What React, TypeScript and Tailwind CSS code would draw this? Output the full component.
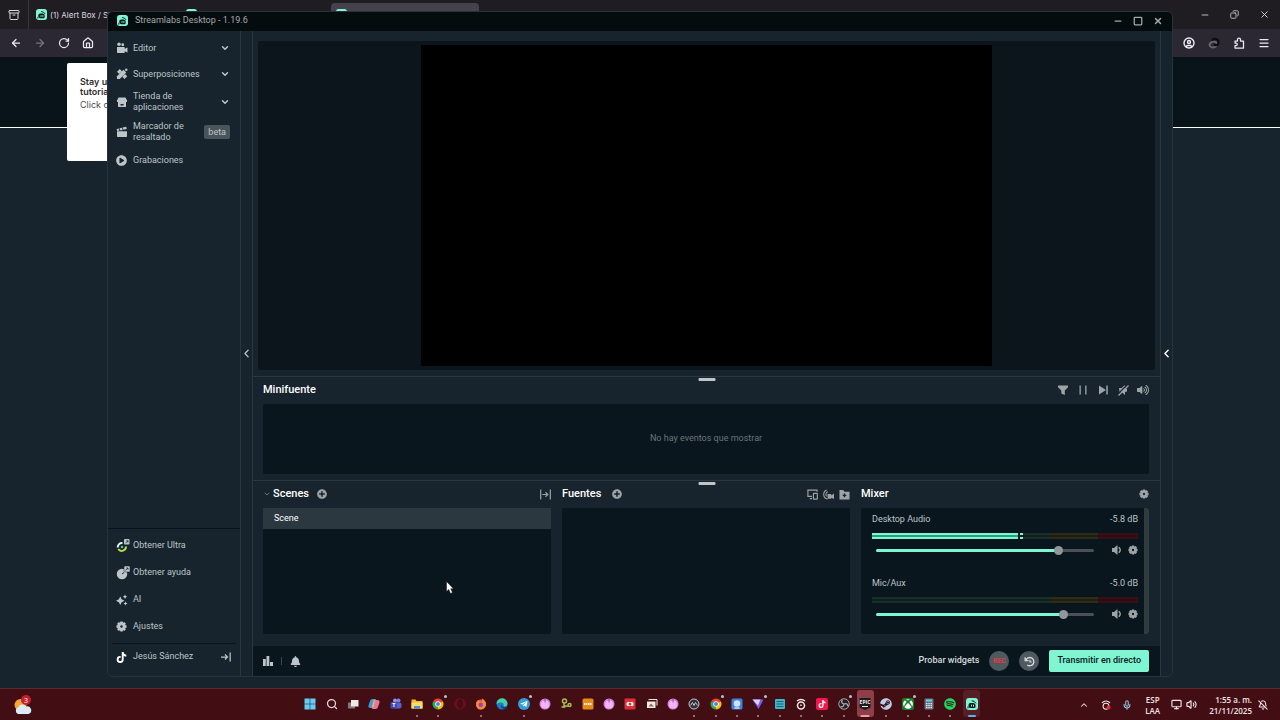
import type { ReactNode } from 'react';
import {
  FaVolumeUp, FaBell, FaPlusCircle, FaPlayCircle, FaTiktok, FaTelegramPlane, FaXbox,
  FaSteam, FaSpotify, FaOpera,
} from 'react-icons/fa';
import {
  ArrowLeft, ArrowRight, RotateCw, House, ChevronDown, ChevronLeft, ChevronUp, X, Minus,
  Square, Copy, Menu, CircleUser, Search, Mic, Volume2, BellOff, Monitor, Archive,
} from 'lucide-react';

function Logo({ className = '' }: { className?: string }) {
  return (
    <svg viewBox="0 0 24 24" className={className} aria-hidden="true">
      <rect width="24" height="24" rx="6" fill="#80f5d2" />
      <path d="M5 14a4 4 0 0 1 4-4h5a5 5 0 0 1 5 5v2.500a2.500 2.500 0 0 1-2.500 2.500H9a4 4 0 0 1-4-4z" fill="#09161d" />
      <path d="M12 5.500a8 8 0 0 1 7.500 4.500M4 18v2" stroke="#09161d" strokeWidth="2" fill="none" strokeLinecap="round" />
      <path d="M11 14v2.500M15 14v2.500" stroke="#80f5d2" strokeWidth="2" strokeLinecap="round" />
    </svg>
  );
}

function Gear({ className = '' }: { className?: string }) {
  return (
    <svg viewBox="0 0 24 24" className={className} fill="none" stroke="currentColor" aria-hidden="true">
      <circle cx="12" cy="12" r="6" strokeWidth="6.500" />
      <path d="M12 1v4M12 19v4M1 12h4M19 12h4M4.200 4.200 7 7M17 17l2.800 2.800M19.800 4.200 17 7M7 17l-2.800 2.800" strokeWidth="5.500" />
    </svg>
  );
}

const EditorIcon = (
  <svg viewBox="0 0 24 24" className="size-3" fill="currentColor" aria-hidden="true">
    <circle cx="6" cy="4.500" r="3.500" /><circle cx="13.500" cy="5.500" r="2.800" />
    <path d="M2 10h14a1.500 1.500 0 0 1 1.500 1.500v2L23 11v10l-5.500-2.500v2A1.500 1.500 0 0 1 16 22H3.500A1.500 1.500 0 0 1 2 20.500z" />
  </svg>
);
const OverlayIcon = (
  <svg viewBox="0 0 24 24" className="size-3" fill="currentColor" aria-hidden="true">
    <path d="M2 16.500 15 3.500l5.500 5.500L7.500 22H2z" />
    <path d="M2 7.500 7.500 2l4.500 4.500L6.500 12zM12.500 17.500l5.500-5.500 4.500 4.500-5.500 5.500z" />
    <circle cx="20.500" cy="3.500" r="2.500" />
  </svg>
);
const StoreIcon = (
  <svg viewBox="0 0 24 24" className="size-3" fill="currentColor" aria-hidden="true">
    <path d="M5 3h14l3 6v3H2V9z" />
    <path d="M4 12h16v10H4z" />
    <path d="M9 16h6v3H9z" fill="#17242d" />
  </svg>
);
const ClapperIcon = (
  <svg viewBox="0 0 24 24" className="size-3" fill="currentColor" aria-hidden="true">
    <path d="M2 10.500h20v10a1.500 1.500 0 0 1-1.500 1.500h-17A1.500 1.500 0 0 1 2 20.500z" />
    <path d="m1.500 6 4-1 1.500 4-5 1zM7 4.500l4.500-1L13.500 8 9 9zM13 3l7.500-1.500 1 4.500L15 7.500z" />
  </svg>
);
const UltraIcon = (
  <svg viewBox="0 0 28 28" className="size-[14px]" aria-hidden="true">
    <path d="M13 8A8.500 8.500 0 0 0 3.500 17" stroke="#eaf3f2" strokeWidth="4" fill="none" />
    <path d="M4.500 20A8.500 8.500 0 0 0 20 15" stroke="#b7dc47" strokeWidth="4" fill="none" />
    <circle cx="12" cy="16" r="2.500" fill="#3bd19a" />
    <rect x="16" y="0" width="11" height="11" rx="2" fill="#bdc5c8" />
    <path d="M19 8.500 24 3.500m0 3.500V3.500h-3.500" stroke="#17242d" strokeWidth="1.500" fill="none" />
  </svg>
);
const HelpIcon = (
  <svg viewBox="0 0 28 28" className="size-[14px]" aria-hidden="true">
    <circle cx="12" cy="16" r="10.500" fill="#bdc5c8" />
    <path d="m12 16 4-3" stroke="#17242d" strokeWidth="2" fill="none" />
    <rect x="16" y="0" width="12" height="12" rx="2" fill="#bdc5c8" stroke="#17242d" strokeWidth="1" />
    <path d="M19 9 24 4m0 3.500V4h-3.500" stroke="#17242d" strokeWidth="1.500" fill="none" />
  </svg>
);
const SparkIcon = (
  <svg viewBox="0 0 24 24" className="size-3" fill="currentColor" aria-hidden="true">
    <path d="m8.500 5 2.800 5.700L17 13.500l-5.700 2.800L8.500 22l-2.800-5.700L0 13.500l5.700-2.800zM18 1l1.500 3L22.500 5.500 19.500 7 18 10l-1.500-3-3-1.500 3-1.500zM19 15l1.300 2.700L23 19l-2.700 1.300L19 23l-1.300-2.700L15 19l2.700-1.300z" />
  </svg>
);
const ExitIcon = (
  <svg viewBox="0 0 24 24" className="size-[10px]" fill="none" stroke="currentColor" strokeWidth="3" aria-hidden="true">
    <path d="M0 12h15M9.500 6l6 6-6 6M22 1v22" />
  </svg>
);
const CollapseIcon = (
  <svg viewBox="0 0 24 24" className="size-[11px]" fill="none" stroke="currentColor" strokeWidth="2.600" aria-hidden="true">
    <path d="M1.500 1v22M22.500 1v22M5 12h12M12 7l5 5-5 5" />
  </svg>
);
const FilterIcon = (
  <svg viewBox="0 0 12 12" className="size-3" fill="currentColor" aria-hidden="true">
    <path d="M1 1.500h10v1.700L7.800 6.500V11L4.300 9.500v-3L1 3.200z" />
  </svg>
);
const PauseIcon = (
  <svg viewBox="0 0 12 12" className="size-3" fill="currentColor" aria-hidden="true">
    <path d="M2.500 1.500h1.300v9H2.500zM8.200 1.500h1.300v9H8.200z" />
  </svg>
);
const NextIcon = (
  <svg viewBox="0 0 12 12" className="size-3" fill="currentColor" aria-hidden="true">
    <path d="M2 1.500 9 6l-7 4.500zM9.300 1.500h1.500v9H9.300z" />
  </svg>
);
const MutedIcon = (
  <svg viewBox="0 0 24 24" className="size-3" aria-hidden="true">
    <path d="M4 8h5l7-6v6l4 2v5l-4 1v6l-7-6H5z" fill="currentColor" />
    <path d="M1 21 20 2" stroke="#17242d" strokeWidth="2.500" />
    <path d="M3 23 23 3" stroke="currentColor" strokeWidth="2.500" />
  </svg>
);
const ScreensIcon = (
  <svg viewBox="0 0 24 24" className="size-[11px]" fill="none" stroke="currentColor" strokeWidth="2.500" aria-hidden="true">
    <path d="M22 6V2.500H2V16h9M6 21h5" /><rect x="14" y="9.500" width="8.500" height="12.500" rx="1" />
  </svg>
);
const StreamCamIcon = (
  <svg viewBox="0 0 24 24" className="size-[11px]" aria-hidden="true">
    <path d="M8 2a10.500 10.500 0 0 0 2 20M11 6a6 6 0 0 0-3 10" stroke="currentColor" strokeWidth="2.200" fill="none" />
    <path d="M10 11h8v3l6-4v12l-6-3v2h-8z" fill="currentColor" />
  </svg>
);
const FolderAddIcon = (
  <svg viewBox="0 0 24 24" className="size-[11px]" aria-hidden="true">
    <path d="M1 2h8l3 4h11v17H1z" fill="currentColor" />
    <path d="M12 10v8M8 14h8" stroke="#17242d" strokeWidth="3" />
  </svg>
);
const SpeakerIcon = (
  <svg viewBox="0 0 20 20" className="size-[10px]" aria-hidden="true">
    <path d="M0 6h4l7-6v20l-7-6H0z" fill="currentColor" />
    <path d="M13.500 4.500Q19.500 10 13.500 15.500" stroke="currentColor" strokeWidth="2.800" fill="none" />
  </svg>
);
const ReplayIcon = (
  <svg viewBox="0 0 24 24" className="size-[11px]" fill="none" stroke="#d5dadc" strokeWidth="3" aria-hidden="true">
    <path d="M4 9a9 9 0 1 1 3 10.500" /><path d="M2.500 2.500V10H10" /><path d="M13 8v5h4" strokeWidth="2.500" />
  </svg>
);

function NavItem({ icon, label, after, tall }: { icon: ReactNode; label: ReactNode; after?: ReactNode; tall?: boolean }) {
  return (
    <button type="button" className={`flex w-full items-center pr-[10px] pl-2 text-left ${tall ? 'h-[30px]' : 'h-[26px]'}`}>
      <span className="flex w-[17px] shrink-0">{icon}</span>
      <span className="flex-1 leading-[11px]">{label}</span>
      {after}
    </button>
  );
}

function BottomItem({ icon, label }: { icon: ReactNode; label: string }) {
  return (
    <button type="button" className="flex h-[27px] w-full items-center pl-2 text-left">
      <span className="flex w-[17px] shrink-0">{icon}</span>
      {label}
    </button>
  );
}

const Chevron = <ChevronDown className="size-[10px]" strokeWidth={3.5} />;

function Sidebar() {
  return (
    <nav className="flex w-[133px] shrink-0 flex-col border-r border-[#2a373e] text-[9px] text-[#bdc5c8]">
      <div className="flex flex-1 flex-col pt-1">
        <NavItem icon={EditorIcon} label="Editor" after={Chevron} />
        <NavItem icon={OverlayIcon} label="Superposiciones" after={Chevron} />
        <NavItem tall icon={StoreIcon} label={<>Tienda de<br />aplicaciones</>} after={Chevron} />
        <NavItem
          tall
          icon={ClapperIcon}
          label={<>Marcador de<br />resaltado</>}
          after={<span className="rounded-[2px] bg-[#4a555b] px-1 leading-[14px]">beta</span>}
        />
        <NavItem icon={<FaPlayCircle className="size-[11px]" />} label="Grabaciones" />
      </div>
      <div className="border-t border-[#09141a] pt-[3px] pb-[6px]">
        <BottomItem icon={UltraIcon} label="Obtener Ultra" />
        <BottomItem icon={HelpIcon} label="Obtener ayuda" />
        <BottomItem icon={SparkIcon} label="AI" />
        <BottomItem icon={<Gear className="size-[11px]" />} label="Ajustes" />
        <div className="mx-1 mt-[3px] border-t border-[#09141a]" />
        <button type="button" className="flex h-[26px] w-full items-center pr-[9px] pl-2 text-left">
          <span className="flex w-[17px] shrink-0"><FaTiktok className="size-[11px] text-white" /></span>
          <span className="flex-1">Jesús Sánchez</span>
          {ExitIcon}
        </button>
      </div>
    </nav>
  );
}

function Handle() {
  return <div className="absolute top-[1px] left-1/2 h-[3px] w-[17px] -translate-x-1/2 rounded-[1px] bg-[#bdc5c8]" />;
}

function Pointer() {
  return (
    <svg viewBox="0 0 16 26" className="pointer-events-none absolute top-[73px] left-[183px] h-[13px] w-2" aria-hidden="true">
      <path d="M1 1v20l4.500-4 3.500 8 4-2-3.500-7.500H15z" fill="#fff" stroke="#111" strokeWidth="1" />
    </svg>
  );
}

function IconButton({ label, children }: { label: string; children: ReactNode }) {
  return <button type="button" aria-label={label} className="flex text-[#9da3a6]">{children}</button>;
}

function Channel({ name, db, value, live }: { name: string; db: string; value: number; live?: boolean }) {
  const row = (
    <div className="flex h-[2px]">
      {live && <><div className="w-[55%] bg-[#80f5d2]" /><div className="w-[2px]" /><div className="w-[3px] bg-[#80f5d2]" /></>}
      <div className="flex-1 bg-[#17302b]" />
      <div className="w-[18%] bg-[#302b15]" />
      <div className="w-[15%] bg-[#3b0d15]" />
    </div>
  );
  return (
    <div className="mb-[22px]">
      <div className="flex h-3 items-center justify-between">
        <span>{name}</span><span>{db}</span>
      </div>
      <div className="mt-[7px] flex h-[6px] flex-col">
        {row}
        <div className="flex h-[2px]">
          <div className={live ? 'w-[55%] bg-[#27a07c]' : 'w-[67%] bg-[#11211f]'} />
          <div className={live ? 'flex-1 bg-[#171f18]' : 'flex-1 bg-[#201f14]'} />
          <div className="w-[15%] bg-[#300d14]" />
        </div>
        {row}
      </div>
      <div className="mt-[5px] flex h-3 items-center pl-1">
        <input
          type="range"
          aria-label={`${name} volumen`}
          defaultValue={value}
          step="0.1"
          className="h-[3px] min-w-0 flex-1 appearance-none rounded-full [&::-webkit-slider-thumb]:size-[9px] [&::-webkit-slider-thumb]:appearance-none [&::-webkit-slider-thumb]:rounded-full [&::-webkit-slider-thumb]:bg-[#91979a]"
          style={{ background: `linear-gradient(to right, #80f5d2 ${value}%, #4a5155 ${value}%)` }}
        />
        <span className="ml-[18px] flex gap-[6px]">
          <IconButton label={`Silenciar ${name}`}>{SpeakerIcon}</IconButton>
          <IconButton label={`Ajustes de ${name}`}><Gear className="size-[10px]" /></IconButton>
        </span>
      </div>
    </div>
  );
}

function Panels() {
  return (
    <section className="relative grid grid-cols-3 gap-[11px] border-t border-[#2a373e] pr-[11px] pb-3 pl-[10px]">
      <Handle />
      <div>
        <div className="mb-px flex h-[26px] items-center">
          <ChevronDown className="mr-[2px] size-[8px] text-[#91979a]" />
          <h2 className="mr-2 text-[11px] font-medium text-white">Scenes</h2>
          <IconButton label="Añadir escena"><FaPlusCircle className="size-[10px]" /></IconButton>
          <span className="ml-auto"><IconButton label="Contraer escenas">{CollapseIcon}</IconButton></span>
        </div>
        <div className="relative h-[126px] rounded-[2px] bg-[#09161d]">
          <button type="button" className="flex h-[21px] w-full items-center bg-[#2b383f] pl-[11px] text-[9px] text-white">Scene</button>
          <Pointer />
        </div>
      </div>
      <div>
        <div className="mb-px flex h-[26px] items-center">
          <h2 className="mr-[11px] text-[11px] font-medium text-white">Fuentes</h2>
          <IconButton label="Añadir fuente"><FaPlusCircle className="size-[10px]" /></IconButton>
          <span className="ml-auto flex gap-[5px]">
            <IconButton label="Pantallas">{ScreensIcon}</IconButton>
            <IconButton label="Cámara">{StreamCamIcon}</IconButton>
            <IconButton label="Añadir grupo">{FolderAddIcon}</IconButton>
          </span>
        </div>
        <div className="h-[126px] rounded-[2px] bg-[#09161d]" />
      </div>
      <div>
        <div className="mb-px flex h-[26px] items-center justify-between">
          <h2 className="text-[11px] font-medium text-white">Mixer</h2>
          <IconButton label="Ajustes de audio"><Gear className="size-[10px]" /></IconButton>
        </div>
        <div className="flex h-[126px] overflow-hidden rounded-[2px] bg-[#09161d] text-[9px] text-[#bdc5c8]">
          <div className="min-w-0 flex-1 pt-[6px] pr-[6px] pl-[11px]">
            <Channel name="Desktop Audio" db="-5.8 dB" value={85} live />
            <Channel name="Mic/Aux" db="-5.0 dB" value={87.5} />
          </div>
          <div className="w-[5px] rounded-r-[2px] bg-[#303c40]" />
        </div>
      </div>
    </section>
  );
}

function Editor() {
  return (
    <main className="flex min-w-0 flex-1 flex-col">
      <section className="flex min-h-0 flex-1 px-[5px] pt-[10px] pb-[6px]">
        <div className="flex min-h-0 flex-1 justify-center rounded-[2px] bg-[#0c151c] py-1">
          <div className="aspect-video h-full bg-black" />
        </div>
      </section>
      <section className="relative border-t border-[#2a373e] pr-[11px] pb-[6px] pl-[10px]">
        <Handle />
        <div className="mb-px flex h-[26px] items-center justify-between">
          <h2 className="text-[11px] font-medium text-white">Minifuente</h2>
          <div className="flex gap-2">
            <IconButton label="Filtrar">{FilterIcon}</IconButton>
            <IconButton label="Pausar">{PauseIcon}</IconButton>
            <IconButton label="Siguiente">{NextIcon}</IconButton>
            <IconButton label="Desactivar alertas">{MutedIcon}</IconButton>
            <IconButton label="Volumen"><FaVolumeUp className="size-3" /></IconButton>
          </div>
        </div>
        <div className="flex h-[70px] items-center justify-center rounded-[2px] bg-[#09161d] text-[9px] text-[#6b757a]">
          No hay eventos que mostrar
        </div>
      </section>
      <Panels />
      <footer className="flex h-[30px] items-center bg-[#09161d] pr-[11px] pl-[10px] text-[9px] text-[#bdc5c8]">
        <button type="button" aria-label="Rendimiento" className="flex">
          <svg viewBox="0 0 10 10" className="size-[10px]" fill="currentColor"><path d="M0 3h2.800v7H0zM3.500 0h2.800v10H3.500zM7 6h3v4H7z" /></svg>
        </button>
        <span className="mx-2 h-2 w-px bg-[#3a464c]" />
        <button type="button" aria-label="Notificaciones" className="flex"><FaBell className="size-[11px]" /></button>
        <button type="button" className="ml-auto font-medium text-[#d5dadc]">Probar widgets</button>
        <button type="button" className="ml-[10px] flex size-5 items-center justify-center rounded-full bg-[#4f5a60] text-[7px] font-bold text-[#e03a44]">REC</button>
        <button type="button" aria-label="Repetición" className="mx-[10px] flex size-5 items-center justify-center rounded-full bg-[#4f5a60]">{ReplayIcon}</button>
        <button type="button" className="h-[22px] rounded-[2px] bg-[#80f5d2] px-2 font-medium text-[#09161d]">Transmitir en directo</button>
      </footer>
    </main>
  );
}

function StreamWindow() {
  return (
    <div className="absolute top-[11px] right-[107px] bottom-[43px] left-[107px] flex flex-col overflow-hidden rounded-md border border-[#26333a] bg-[#17242d] font-[Roboto,sans-serif]">
      <header className="flex h-[19px] shrink-0 items-center bg-[#040c0e] pr-[9px] pb-[2px] pl-[9px] text-[#a5abad]">
        <Logo className="mr-[7px] size-[11px]" />
        <h1 className="flex-1 text-[9px]">Streamlabs Desktop - 1.19.6</h1>
        <div className="flex gap-[10px]">
          <button type="button" aria-label="Minimizar"><Minus className="size-[10px]" strokeWidth={3} /></button>
          <button type="button" aria-label="Maximizar"><Square className="size-[10px]" strokeWidth={3} /></button>
          <button type="button" aria-label="Cerrar"><X className="size-[10px]" strokeWidth={3.5} /></button>
        </div>
      </header>
      <div className="flex min-h-0 flex-1">
        <Sidebar />
        <button type="button" aria-label="Contraer menú" className="flex w-3 shrink-0 items-center justify-center border-r border-[#2a373e] text-[#bdc5c8]">
          <ChevronLeft className="size-[13px] shrink-0" strokeWidth={2.2} />
        </button>
        <Editor />
        <button type="button" aria-label="Abrir chat" className="flex w-3 shrink-0 items-center justify-center border-l border-[#2a373e] text-white">
          <ChevronLeft className="size-[13px] shrink-0" strokeWidth={2.6} />
        </button>
      </div>
    </div>
  );
}

function Tab({ title, active }: { title: string; active?: boolean }) {
  return (
    <div className={`mt-[3px] flex w-[148px] items-center rounded-t pl-[5px] ${active ? 'bg-[#45424d]' : ''}`}>
      <Logo className="mr-[3px] size-[11px] shrink-0" />
      <span className="truncate">{title}</span>
    </div>
  );
}

function Browser() {
  return (
    <div className="flex flex-1 flex-col bg-[#17242d] font-[Inter,sans-serif]">
      <div className="flex h-[29px] bg-[#1f1c22] text-[8px] text-[#dcdbe0]">
        <button type="button" aria-label="Pestañas" className="flex w-[29px] items-center justify-center border-r border-[#3a3740]">
          <Archive className="size-3" />
        </button>
        <div className="flex flex-1 gap-[2px] pb-[3px] pl-[2px]">
          <Tab title="(1) Alert Box / Sh" />
          <Tab title="" />
          <Tab title="" active />
        </div>
        <div className="flex items-center gap-5 pr-[10px]">
          <Minus className="size-[10px]" strokeWidth={2} />
          <Copy className="size-[9px] -scale-x-100" />
          <X className="size-[11px]" strokeWidth={2} />
        </div>
      </div>
      <div className="flex h-7 items-center justify-between bg-[#2b2833] pr-[10px] pl-[10px] text-[#ece9f2]">
        <div className="flex gap-3">
          <button type="button" aria-label="Atrás"><ArrowLeft className="size-3" strokeWidth={2.5} /></button>
          <button type="button" aria-label="Adelante" className="text-[#77747e]"><ArrowRight className="size-3" strokeWidth={2.5} /></button>
          <button type="button" aria-label="Recargar"><RotateCw className="size-3" strokeWidth={2.5} /></button>
          <button type="button" aria-label="Inicio"><House className="size-3" strokeWidth={2.5} /></button>
        </div>
        <div className="flex gap-[13px]">
          <button type="button" aria-label="Cuenta"><CircleUser className="size-3" strokeWidth={2.8} /></button>
          <button type="button" aria-label="Extensión">
            <svg viewBox="0 0 24 24" className="size-3" fill="none" strokeWidth="4"><path d="M3 17c0-8 12-10 15-4M3 17c2 5 10 5 14 1" stroke="#68656e" /><path d="M8 7c4-6 13-3 13 3s-3 7-9 6" stroke="#0c0b0f" /></svg>
          </button>
          <button type="button" aria-label="Complementos">
            <svg viewBox="0 0 24 24" className="size-3" fill="none" stroke="currentColor" strokeWidth="2.500" strokeLinejoin="round"><path d="M4 8h5V5a3 3 0 0 1 6 0v3h6v14H4v-5h2a2.500 2.500 0 0 0 0-5H4z" /></svg>
          </button>
          <button type="button" aria-label="Menú"><Menu className="size-3" strokeWidth={2.5} /></button>
        </div>
      </div>
      <div className="relative h-[71px] border-b border-white bg-[#08141a]">
        <div className="absolute top-[6px] left-[67px] h-[98px] w-[120px] rounded-[2px] bg-white pt-[14px] pl-[13px] text-[9px] leading-[10px] text-[#4a4a4a]">
          <p className="font-semibold text-[#2b2b2b]">Stay up<br />tutorial</p>
          <p className="mt-[3px]">Click on</p>
        </div>
      </div>
    </div>
  );
}

function ChromeIcon() {
  return (
    <svg viewBox="0 0 24 24" className="size-3">
      <path d="M12 12 2.500 6.500A11 11 0 0 1 21.500 6.500z" fill="#e94335" />
      <path d="M12 12V23A11 11 0 0 1 2.500 6.500z" fill="#34a853" />
      <path d="M12 12l9.500-5.500A11 11 0 0 1 12 23z" fill="#fbbc05" />
      <circle cx="12" cy="12" r="5.500" fill="#fff" /><circle cx="12" cy="12" r="4" fill="#4285f4" />
    </svg>
  );
}

function PinkIcon() {
  return (
    <svg viewBox="0 0 24 24" className="size-3">
      <circle cx="12" cy="12" r="11" fill="#d583de" /><circle cx="12" cy="13" r="8" fill="#f1b6f3" />
      <path d="M12 2v7" stroke="#7d3190" strokeWidth="1.500" />
    </svg>
  );
}

type App = { name: string; icon: ReactNode; open?: boolean; dot?: boolean; hi?: 'strong' | 'soft' };

const apps: App[] = [
  { name: 'Inicio', icon: <svg viewBox="0 0 24 24" className="size-3" fill="#62cdf5"><path d="M1 1h10.500v10.500H1zM12.500 1H23v10.500H12.500zM1 12.500h10.500V23H1zM12.500 12.500H23V23H12.500z" /></svg> },
  { name: 'Buscar', icon: <Search className="size-3 text-[#ead9dc]" strokeWidth={2.5} /> },
  { name: 'Vista de tareas', icon: <svg viewBox="0 0 24 24" className="size-3"><rect x="2" y="9" width="14" height="12" fill="#8a7377" /><rect x="8" y="4" width="15" height="13" fill="#efe9ea" /></svg> },
  { name: 'Copilot', icon: <svg viewBox="0 0 24 24" className="size-3"><path d="M9 2h7l-5 18H5q-5 0-4-5l3-9q1-4 5-4z" fill="#3d9be0" /><path d="M15 22H8l5-18h6q5 0 4 5l-3 9q-1 4-5 4z" fill="#e8779a" /><path d="m13 4-4 15" stroke="#f2b84b" strokeWidth="3" /></svg> },
  { name: 'Teams', icon: <svg viewBox="0 0 24 24" className="size-3"><circle cx="17" cy="5" r="4" fill="#7b83eb" /><circle cx="10" cy="5" r="4" fill="#8d95f5" /><rect x="6" y="9" width="17" height="12" rx="4" fill="#5a62c9" /><rect x="1" y="8" width="13" height="13" rx="2" fill="#444bb0" /><text x="7.500" y="18.500" fontSize="11" fontWeight="700" textAnchor="middle" fill="#fff">T</text></svg> },
  { name: 'Explorador', open: true, icon: <svg viewBox="0 0 24 24" className="size-3"><path d="M1 3h8l2 3h12v15H1z" fill="#f5b92e" /><path d="M1 9h22v12H1z" fill="#fcdc72" /><path d="M6 16h12v5H6z" fill="#3f8ed8" /></svg> },
  { name: 'Chrome', open: true, dot: true, icon: <ChromeIcon /> },
  { name: 'Opera', icon: <FaOpera className="size-3 text-[#6d0f1a]" /> },
  { name: 'Firefox', open: true, icon: <svg viewBox="0 0 24 24" className="size-3"><circle cx="12" cy="13" r="10" fill="#ff4b55" /><path d="M2 12Q3 5 7 4q0 3 3 4 5-1 4-7 9 5 8 13-3 9-11 9T2 12z" fill="#ff8a2b" /><circle cx="11.500" cy="13.500" r="4.500" fill="#8443d6" /></svg> },
  { name: 'Edge', icon: <svg viewBox="0 0 24 24" className="size-3"><circle cx="12" cy="12" r="11" fill="#1c79d0" /><path d="M1 12A11 11 0 0 1 23 11q0 6-8 6 2-7-4-8Q5 8 1 12z" fill="#45d0a4" /><path d="M10 13q-1 7 6 9 4-1 5-4-9 1-11-5z" fill="#0b3f86" /></svg> },
  { name: 'Telegram', open: true, dot: true, icon: <span className="flex size-3 items-center justify-center rounded-full bg-[#35a0d8]"><FaTelegramPlane className="size-2 text-white" /></span> },
  { name: 'Aplicación 1', icon: <PinkIcon /> },
  { name: 'Nodos', icon: <svg viewBox="0 0 24 24" className="size-3" fill="none" stroke="#a9bd55" strokeWidth="3"><circle cx="9" cy="6" r="4" /><circle cx="19" cy="14" r="3" /><path d="M8 10v6h8M3 18h8" /></svg> },
  { name: 'Utilidad', icon: <svg viewBox="0 0 24 24" className="size-3"><rect x="1" y="1" width="22" height="22" rx="3" fill="#e58b1f" /><path d="M4 12h16" stroke="#fff1d5" strokeWidth="4" strokeDasharray="3 1" /></svg> },
  { name: 'Aplicación 2', icon: <PinkIcon /> },
  { name: 'Grabadora', icon: <svg viewBox="0 0 24 24" className="size-3"><rect x="1" y="1" width="22" height="22" rx="2" fill="#dc3038" /><rect x="5" y="8" width="14" height="8" rx="3" fill="#fff" /><circle cx="12" cy="12" r="3" fill="#dc3038" /></svg> },
  { name: 'Galería', icon: <svg viewBox="0 0 24 24" className="size-3"><path d="M5 3h17v12" stroke="#efe5dc" strokeWidth="2" fill="none" /><rect x="2" y="7" width="17" height="13" fill="#f0e9e2" /><path d="m5 17 5-6 6 6z" fill="#896b62" /></svg> },
  { name: 'Aplicación 3', icon: <PinkIcon /> },
  { name: 'Medidor', open: true, icon: <svg viewBox="0 0 24 24" className="size-3" fill="#30313a" stroke="#c6c4ca" strokeWidth="2"><circle cx="12" cy="12" r="10" /><path d="m5 15 4-6 3 6 3-6 4 6" /></svg> },
  { name: 'Chrome 2', open: true, dot: true, icon: <ChromeIcon /> },
  { name: 'Contactos', open: true, icon: <svg viewBox="0 0 24 24" className="size-3"><rect x="1" y="1" width="22" height="22" rx="3" fill="#3e81dd" /><circle cx="12" cy="11" r="6.500" fill="#cfe3ff" /><path d="M7 20h10" stroke="#cfe3ff" strokeWidth="3" /></svg> },
  { name: 'VPN', open: true, dot: true, icon: <svg viewBox="0 0 24 24" className="size-3"><path d="M1 3h22L13 22z" fill="#7a5af5" /><path d="M1 3h16l-5 12z" fill="#d9d4ff" /></svg> },
  { name: 'Notas', open: true, icon: <svg viewBox="0 0 24 24" className="size-3"><rect x="2" y="2" width="20" height="20" rx="2" fill="#41b3c4" /><path d="M5 7h14M5 12h14M5 17h14" stroke="#176775" strokeWidth="2" /></svg> },
  { name: 'Conector', open: true, icon: <svg viewBox="0 0 24 24" className="size-3" fill="none" stroke="#f2eaea" strokeWidth="3"><circle cx="12" cy="15" r="7" /><path d="M4 6q8-6 16 0M12 13v3" /></svg> },
  { name: 'TikTok', open: true, icon: <span className="flex size-3 items-center justify-center rounded-[2px] bg-[#f2184f]"><FaTiktok className="size-2 text-white" /></span> },
  { name: 'OBS', open: true, dot: true, icon: <svg viewBox="0 0 24 24" className="size-3" fill="none" stroke="#b8b2b6" strokeWidth="1.800"><circle cx="12" cy="12" r="10.500" fill="#231f25" /><path d="M12 12c-5-1-6-5-3-8M12 12c5-2 8 0 8 5M12 12c0 5-4 7-7 5" strokeWidth="2.500" /></svg> },
  { name: 'Epic Games', open: true, hi: 'strong', icon: <svg viewBox="0 0 24 24" className="size-3"><path d="M1 0h22v19l-11 5-11-5z" fill="#1e1b1d" /><text x="12" y="12.500" fontSize="10" fontWeight="700" textAnchor="middle" fill="#f2eeee">EPIC</text><path d="M6 17h12" stroke="#f2eeee" strokeWidth="2" /></svg> },
  { name: 'Steam', open: true, icon: <FaSteam className="size-3 text-[#b9d0ea]" /> },
  { name: 'Xbox', open: true, dot: true, icon: <span className="flex size-3 items-center justify-center rounded-[2px] bg-[#187c2a]"><FaXbox className="size-[10px] text-white" /></span> },
  { name: 'Calculadora', open: true, icon: <svg viewBox="0 0 24 24" className="size-3"><rect x="3" y="1" width="18" height="22" rx="2" fill="#667481" /><path d="M6 5h12" stroke="#60cff0" strokeWidth="4" /><path d="M6 11h12M6 15h12M6 19h12" stroke="#dde3e8" strokeWidth="2.500" strokeDasharray="3 1.500" /></svg> },
  { name: 'Spotify', open: true, icon: <FaSpotify className="size-3 text-[#1ed760]" /> },
  { name: 'Streamlabs', open: true, hi: 'soft', icon: <Logo className="size-3" /> },
];

function dash(app: App) {
  if (!app.open) return 'w-0';
  if (app.hi === 'strong') return 'w-[9px] bg-[#f09aa6]';
  if (app.hi === 'soft') return 'w-[8px] bg-[#5cb4e8]';
  return 'w-[2px] bg-[#b98a90]';
}

function highlight(app: App) {
  if (app.hi === 'strong') return 'bg-[#8d3e49]';
  if (app.hi === 'soft') return 'bg-[#551f27]';
  return '';
}

function Taskbar() {
  return (
    <div className="flex h-8 shrink-0 items-center border-t border-[#5b2a31] bg-[#430d14] font-['Open_Sans',sans-serif] text-[#f1e4e6]">
      <div className="flex min-w-0 flex-1 pl-[14px]">
        <svg viewBox="0 0 36 40" className="h-5 w-[18px]" role="img" aria-label="Tiempo, 3 avisos">
          <circle cx="13" cy="20" r="12" fill="#f5a63a" />
          <path d="M8 38a7 7 0 0 1 0-13 9 9 0 0 1 16-2 7.500 7.500 0 0 1 5 15z" fill="#dcebfb" />
          <circle cx="24" cy="10" r="10" fill="#c4202e" />
          <text x="24" y="15.500" fontSize="15" textAnchor="middle" fill="#fff">3</text>
        </svg>
      </div>
      <div className="flex w-[683px] pb-[2px]">
        {apps.map((app) => (
          <button key={app.name} type="button" aria-label={app.name} className="flex flex-1 items-center justify-center">
            <span className={`relative flex h-[27px] w-[17px] items-center justify-center rounded-[3px] ${highlight(app)}`}>
              {app.icon}
              {app.dot && <span className="absolute top-[5px] right-0 size-[3px] rounded-full bg-[#b8c3d4]" />}
              <span className={`absolute bottom-0 left-1/2 h-[2px] -translate-x-1/2 rounded-full ${dash(app)}`} />
            </span>
          </button>
        ))}
      </div>
      <div className="flex min-w-0 flex-1 items-center justify-end pr-3 text-[8px] leading-[11px] font-semibold whitespace-nowrap">
        <ChevronUp className="mr-3 size-[10px]" strokeWidth={2.5} />
        <svg viewBox="0 0 24 24" className="mr-[11px] size-[10px]" fill="none" stroke="#efe4e5" strokeWidth="2.500"><path d="M2 7q10-9 20 0" /><circle cx="12" cy="15" r="7" /><circle cx="18" cy="18" r="5" fill="#e02b40" stroke="none" /></svg>
        <Mic className="mr-[13px] size-[10px] text-[#8fc3de]" strokeWidth={2.5} />
        <div className="mr-[11px] text-center">ESP<br />LAA</div>
        <Monitor className="mr-1 size-[11px]" strokeWidth={2.5} />
        <Volume2 className="mr-3 size-[11px]" strokeWidth={2.5} />
        <div className="mr-[6px] text-right">1:55 a. m.<br />21/11/2025</div>
        <BellOff className="size-[10px]" strokeWidth={2.5} />
      </div>
    </div>
  );
}

export default function App() {
  return (
    <div className="relative flex h-screen flex-col overflow-hidden bg-[#17242d]">
      <Browser />
      <StreamWindow />
      <Taskbar />
    </div>
  );
}
